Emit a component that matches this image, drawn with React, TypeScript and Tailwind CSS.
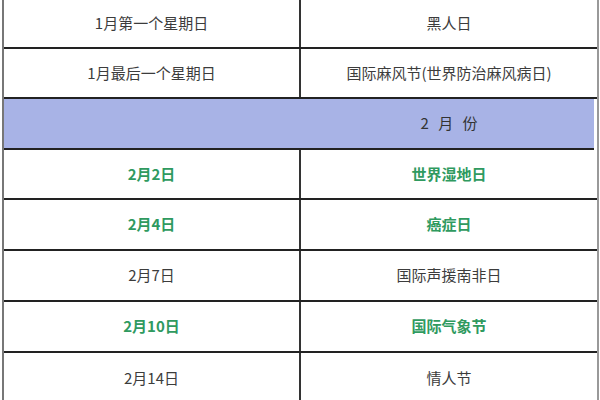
import React from 'react';

type Row = { date: string; name: string; green?: boolean; h: string };

const topRows: Row[] = [
  { date: '1月第一个星期日', name: '黑人日', h: 'h-[49px]' },
  { date: '1月最后一个星期日', name: '国际麻风节(世界防治麻风病日)', h: 'h-[50px]' },
];

const febRows: Row[] = [
  { date: '2月2日', name: '世界湿地日', green: true, h: 'h-[50px]' },
  { date: '2月4日', name: '癌症日', green: true, h: 'h-[51px]' },
  { date: '2月7日', name: '国际声援南非日', h: 'h-[51px]' },
  { date: '2月10日', name: '国际气象节', green: true, h: 'h-[51px]' },
  { date: '2月14日', name: '情人节', h: 'h-[52px]' },
];

const TableRow: React.FC<{ row: Row }> = ({ row }) => {
  const color = row.green ? 'text-[#2f9a5f] font-bold' : 'text-[#3c3c3c]';
  return (
    <div className={`grid grid-cols-[297px_1fr] border-b-2 border-[#222] ${row.h}`}>
      <div className={`flex items-center justify-center border-r-2 border-[#333] ${color}`}>
        {row.date}
      </div>
      <div className={`flex items-center justify-center ${color}`}>{row.name}</div>
    </div>
  );
};

const App: React.FC = () => {
  return (
    <div
      className="w-[600px] h-[400px] overflow-hidden bg-white pl-[2px] text-[15px]"
      style={{ fontFamily: '"Noto Sans CJK SC", "Noto Sans", sans-serif' }}
    >
      <div className="w-[597px] border-l-2 border-r-2 border-l-[#777] border-r-[#999]">
        {topRows.map((r) => (
          <TableRow key={r.date} row={r} />
        ))}

        {/* 2月份 header */}
        <div className="grid grid-cols-[297px_1fr] h-[51px] border-b-2 border-[#222] bg-[#a8b3e6] mr-[3px]">
          <div />
          <div className="flex items-center justify-center text-[#333] tracking-[0.2em] pl-[6px]">
            2 月 份
          </div>
        </div>

        {febRows.map((r) => (
          <TableRow key={r.date} row={r} />
        ))}
      </div>
    </div>
  );
};

export default App;
